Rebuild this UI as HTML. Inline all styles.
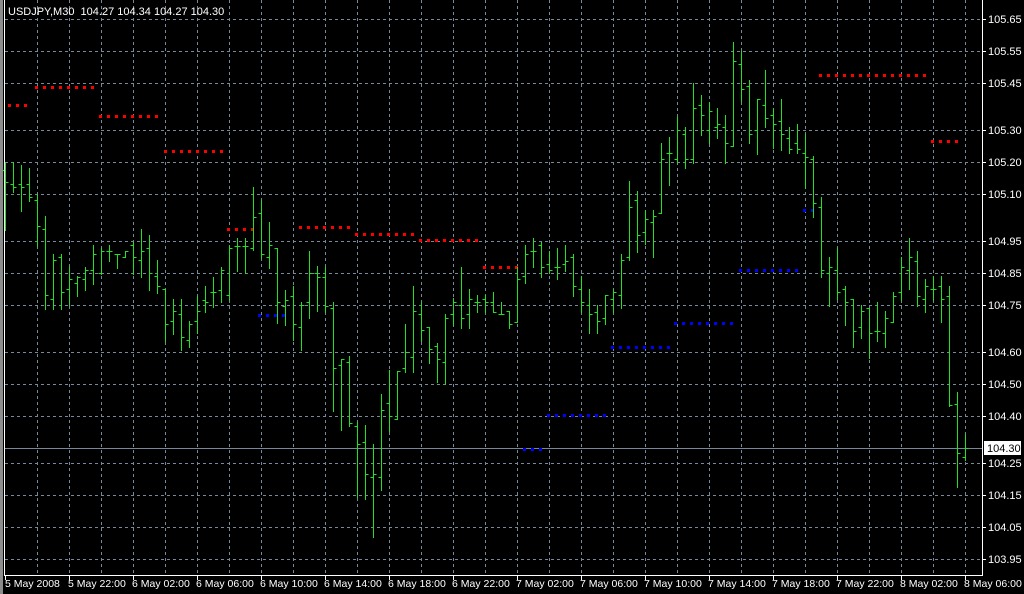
<!DOCTYPE html>
<html><head><meta charset="utf-8"><style>
html,body{margin:0;padding:0;background:#000;width:1024px;height:594px;overflow:hidden}
svg{display:block}
text{font-family:"Liberation Sans",sans-serif;font-size:11px;fill:#fff;white-space:pre}
.tl{font-size:10.5px}
</style></head><body>
<svg id="s" width="1024" height="594" xmlns="http://www.w3.org/2000/svg">
<rect width="1024" height="594" fill="#000"/>
<rect x="0" y="0" width="3" height="594" fill="#8c8c8c"/>
<g id="grid" stroke="#778899" stroke-width="1" stroke-dasharray="3,3"></g>
<line x1="5" y1="448.5" x2="982" y2="448.5" stroke="#778899"/>
<g id="dots"></g>
<path id="bars" stroke="#22e022" stroke-width="1" fill="none"/>
<line x1="4.5" y1="0" x2="4.5" y2="576" stroke="#fff"/>
<line x1="982.5" y1="0" x2="982.5" y2="576" stroke="#fff"/>
<line x1="4" y1="575.5" x2="983" y2="575.5" stroke="#fff"/>
<g id="lab"></g>
<text x="8" y="15" xml:space="preserve">USDJPY,M30  104.27 104.34 104.27 104.30</text>
<rect x="984" y="441" width="37" height="14" fill="#fff"/>
<text x="987" y="452" style="fill:#000">104.30</text>
</svg>
<script>
var NS="http://www.w3.org/2000/svg";
function el(p,t,a,txt){var e=document.createElementNS(NS,t);for(var k in a)e.setAttribute(k,a[k]);if(txt)e.textContent=txt;document.getElementById(p).appendChild(e);}
var hy=[[19,"105.65"],[51,"105.55"],[83,"105.45"],[130,"105.30"],[162,"105.20"],[194,"105.10"],[241,"104.95"],[273,"104.85"],[305,"104.75"],[352,"104.60"],[384,"104.50"],[416,"104.40"],[463,"104.25"],[495,"104.15"],[527,"104.05"],[559,"103.95"]];
hy.forEach(function(h){el("grid","line",{x1:5,x2:982,y1:h[0]+.5,y2:h[0]+.5});
el("lab","line",{x1:982,x2:986,y1:h[0]+.5,y2:h[0]+.5,stroke:"#fff"});
el("lab","text",{x:988,y:h[0]+4},h[1]);});
for(var x=37;x<=965;x+=32)el("grid","line",{x1:x+.5,x2:x+.5,y1:0,y2:575});
var tl=["5 May 2008","5 May 22:00","6 May 02:00","6 May 06:00","6 May 10:00","6 May 14:00","6 May 18:00","6 May 22:00","7 May 02:00","7 May 06:00","7 May 10:00","7 May 14:00","7 May 18:00","7 May 22:00","8 May 02:00","8 May 06:00"];
tl.forEach(function(t,i){var x=5+64*i;el("lab","line",{x1:x+.5,x2:x+.5,y1:576,y2:580,stroke:"#fff"});el("lab","text",{x:(i==0?5:x-1),y:587,"class":"tl"},t);});
var B=[[162,230,170,182],[162,192,184,187],[165,211,184,187],[168,201,184,197],[194,246,200,226],[216,309,229,295],[254,309,299,260],[254,309,257,292],[266,305,289,279],[276,296,283,277],[267,290,279,270],[245,284,270,254],[248,274,273,251],[245,261,251,251],[254,268,254,254],[251,257,257,251],[242,274,245,257],[229,277,260,251],[235,290,248,273],[260,293,276,286],[289,341,289,324],[299,334,321,311],[299,350,314,337],[321,347,340,324],[296,333,321,311],[286,312,300,302],[277,307,292,292],[267,302,290,270],[245,300,295,248],[238,271,246,246],[238,273,246,246],[187,250,248,217],[200,258,213,254],[222,268,257,245],[248,323,248,302],[290,325,306,300],[286,340,296,324],[302,350,327,305],[251,318,302,273],[266,311,273,277],
[267,312,277,306],[302,411,308,368],[359,430,365,359],[356,426,362,423],[422,497,426,444],[425,499,442,474],[444,537,477,474],[394,490,477,410],[370,431,403,416],[371,419,419,371],[324,372,368,352],[286,372,357,311],[302,341,314,330],[327,363,327,349],[343,382,346,359],[314,384,362,318],[298,325,314,302],[267,328,305,318],[289,328,314,299],[295,312,302,302],[295,312,299,302],[292,312,302,312],[302,314,314,314],[311,328,311,324],[267,322,322,279],[245,283,276,254],[238,267,251,251],[242,277,245,267],[251,273,264,270],[248,279,267,267],[245,271,264,261],[254,296,257,286],[276,312,289,302],[289,333,305,314],[305,333,312,321],[295,324,318,295],[289,312,299,292],[254,308,295,260],[181,260,257,207],[191,252,200,235],
[210,244,232,219],[210,257,222,216],[143,213,213,159],[137,185,153,153],[117,163,159,130],[127,168,134,159],[83,163,159,108],[95,135,105,115],[102,143,130,111],[108,138,127,124],[115,163,127,143],[42,146,146,61],[51,101,64,89],[80,143,86,134],[99,154,130,99],[70,127,105,118],[108,148,115,124],[99,150,121,134],[127,153,138,149],[124,153,143,149],[134,188,153,157],[156,217,159,203],[197,277,207,270],[257,306,273,267],[248,299,270,292],[286,325,289,302],[299,347,299,331],[305,338,327,311],[308,358,308,333],[302,341,331,331],[311,347,333,318],[292,322,322,296],[257,300,292,267],[238,289,270,257],[251,306,261,296],[279,312,299,286],[276,300,289,289],[276,322,286,299],[286,406,296,405],[392,487,404,453],[434,460,457,448]];
var d="";B.forEach(function(b,i){var x=5+8*i+.5;d+="M"+x+" "+b[0]+"V"+(b[1]+1)+"M"+(x-3)+" "+(b[2]+.5)+"H"+x+"M"+x+" "+(b[3]+.5)+"H"+(x+3);});
document.getElementById("bars").setAttribute("d",d);
var R=[[9,30,105,"#f00"],[36,93,87,"#f00"],[100,157,116,"#f00"],[165,222,151,"#f00"],[228,253,229,"#f00"],[300,350,227,"#f00"],[356,413,234,"#f00"],[420,476,240,"#f00"],[484,516,267,"#f00"],[820,925,75,"#f00"],[932,963,141,"#f00"],
[259,284,315,"#00f"],[524,540,449,"#00f"],[548,604,415,"#00f"],[612,669,347,"#00f"],[675,732,323,"#00f"],[740,796,270,"#00f"],[804,812,210,"#00f"]];
R.forEach(function(r){for(var x=r[0];x<=r[1];x+=8)el("dots","rect",{x:x-1,y:r[2]-1,width:3,height:3,fill:r[3]});});
</script>
</body></html>
